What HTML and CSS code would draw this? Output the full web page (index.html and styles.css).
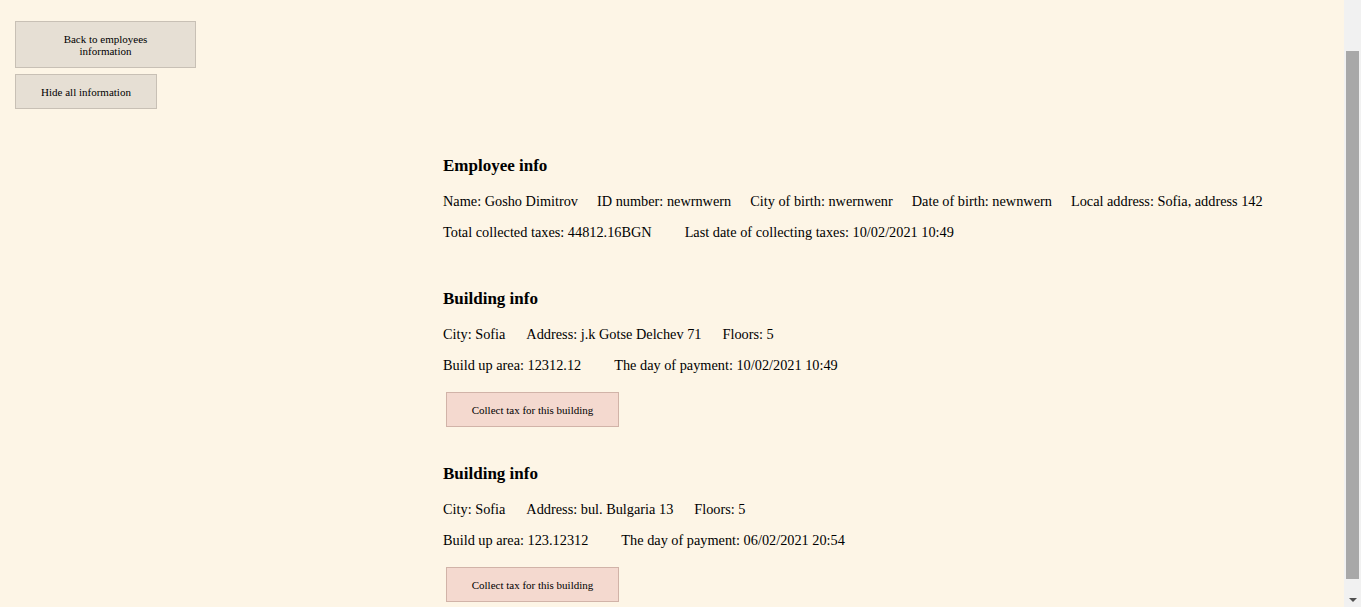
FILE: index.html
```html
<!DOCTYPE html>
<html lang="en">
<head>
<meta charset="utf-8">
<title>Employee info</title>
<link rel="stylesheet" href="styles.css">
</head>
<body>
<div class="sidebar">
  <button class="btn btn-back">Back to employees<br>information</button>
  <button class="btn btn-hide">Hide all information</button>
</div>
<main class="main">
  <section class="block">
    <h3 class="title">Employee info</h3>
    <div class="row row-a">
      <span>Name: Gosho Dimitrov</span>
      <span>ID number: newrnwern</span>
      <span>City of birth: nwernwenr</span>
      <span>Date of birth: newnwern</span>
      <span>Local address: Sofia, address 142</span>
    </div>
    <div class="row row-b">
      <span>Total collected taxes: 44812.16BGN</span>
      <span>Last date of collecting taxes: 10/02/2021 10:49</span>
    </div>
  </section>
  <section class="block building">
    <h3 class="title">Building info</h3>
    <div class="row row-a">
      <span>City: Sofia</span>
      <span>Address: j.k Gotse Delchev 71</span>
      <span>Floors: 5</span>
    </div>
    <div class="row row-b">
      <span>Build up area: 12312.12</span>
      <span>The day of payment: 10/02/2021 10:49</span>
    </div>
    <button class="btn btn-collect">Collect tax for this building</button>
  </section>
  <section class="block building">
    <h3 class="title">Building info</h3>
    <div class="row row-a">
      <span>City: Sofia</span>
      <span>Address: bul. Bulgaria 13</span>
      <span>Floors: 5</span>
    </div>
    <div class="row row-b">
      <span>Build up area: 123.12312</span>
      <span>The day of payment: 06/02/2021 20:54</span>
    </div>
    <button class="btn btn-collect">Collect tax for this building</button>
  </section>
</main>
<div class="scrollbar" aria-hidden="true">
  <div class="scrollbar-thumb"></div>
  <div class="scrollbar-arrow"></div>
</div>
</body>
</html>
```
FILE: styles.css
```css
html, body {
  margin: 0;
  padding: 0;
  background: #fdf5e6;
  color: #000;
  font-family: "Liberation Serif", "Times New Roman", serif;
}

.sidebar {
  display: flex;
  flex-direction: column;
  align-items: flex-start;
  gap: 6px;
  padding: 21px 0 0 15px;
}

.btn {
  font-family: "Liberation Serif", "Times New Roman", serif;
  font-size: 11px;
  line-height: 12px;
  color: #000;
  padding: 0 10px;
  margin: 0;
  border: 1px solid #c8c0b5;
  background: #e6dfd4;
  box-sizing: border-box;
  text-align: center;
  cursor: pointer;
}

.btn-back {
  width: 181px;
  height: 47px;
}

.btn-hide {
  width: 142px;
  height: 35px;
}

.main {
  margin-left: 443px;
  margin-top: 46px;
  padding-bottom: 130px;
}

.title {
  margin: 0;
  padding-top: 1px;
  font-size: 17px;
  line-height: 20px;
  font-weight: bold;
}

.row {
  display: flex;
  font-size: 14.3px;
  line-height: 20px;
  white-space: nowrap;
}

.row-a {
  gap: 19px;
  margin-top: 15px;
}

.building .row-a {
  gap: 21px;
}

.row-b {
  gap: 33px;
  margin-top: 11px;
}

.block + .block {
  margin-top: 46px;
}

.building + .building {
  margin-top: 36px;
}

.btn-collect {
  display: block;
  margin: 17px 0 0 3px;
  width: 173px;
  height: 35px;
  background: #f4d9cf;
  border-color: #d1b3a8;
}

/* browser scrollbar as seen in the screenshot */
.scrollbar {
  position: fixed;
  top: 0;
  right: 0;
  width: 17px;
  height: 100%;
  background: #f1f1f1;
}

.scrollbar-thumb {
  position: absolute;
  top: 51px;
  left: 2px;
  width: 13px;
  height: 528px;
  background: #a8a8a8;
}

.scrollbar-arrow {
  position: absolute;
  top: 598px;
  left: 5px;
  width: 0;
  height: 0;
  border-top: 4px solid #505050;
  border-left: 4px solid transparent;
  border-right: 4px solid transparent;
}
```
